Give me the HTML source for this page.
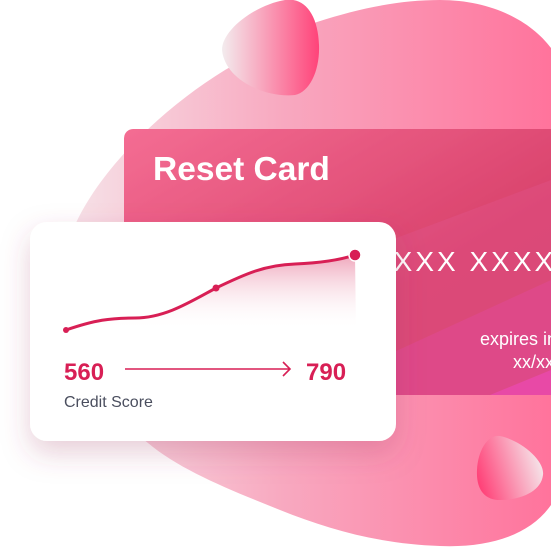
<!DOCTYPE html>
<html><head><style>
html,body{margin:0;padding:0;width:551px;height:551px;overflow:hidden;background:#fff;font-family:"Liberation Sans",sans-serif}
.abs{position:absolute}
</style></head><body>
<svg class="abs" style="left:0;top:0" width="551" height="551" viewBox="0 0 551 551">
<defs>
<linearGradient id="bg" x1="0" y1="0" x2="1" y2="0">
<stop offset="0" stop-color="#f6e4e9"/><stop offset="0.45" stop-color="#f8a9c0"/><stop offset="1" stop-color="#ff739c"/>
</linearGradient>
<linearGradient id="b1" x1="0" y1="0" x2="1" y2="0">
<stop offset="0" stop-color="#f3ecee"/><stop offset="1" stop-color="#ff4379"/>
</linearGradient>
<linearGradient id="b2" x1="1" y1="0.3" x2="0" y2="0.6">
<stop offset="0" stop-color="#f5eef0"/><stop offset="1" stop-color="#ff4379"/>
</linearGradient>
<linearGradient id="card" x1="0" y1="0" x2="1" y2="1">
<stop offset="0" stop-color="#f46d93"/><stop offset="0.6" stop-color="#d9426c"/><stop offset="1" stop-color="#d43d6c"/>
</linearGradient>
<linearGradient id="fill" x1="0" y1="0" x2="0" y2="1">
<stop offset="0" stop-color="#e8809e" stop-opacity="0.7"/><stop offset="1" stop-color="#fff" stop-opacity="0"/>
</linearGradient>
<filter id="sh" x="-30%" y="-30%" width="160%" height="160%"><feDropShadow dx="0" dy="12" stdDeviation="14" flood-color="#a04060" flood-opacity="0.25"/></filter>
<clipPath id="cc"><rect x="124" y="129" width="460" height="266" rx="9"/></clipPath>
</defs>
<path d="M317,22 C360,8 400,0 440,0 C490,0 530,20 551,48 L551,505 C530,535 490,548 440,546 C380,544 330,530 280,510 C230,490 180,470 148,443 C80,390 40,300 75,225 C100,170 160,110 225,70 C260,50 290,32 317,22 Z" fill="url(#bg)"/>
<path d="M222,50 C222,30 255,5 285,0 C305,-3 318,15 319,45 C320,70 310,92 295,95 C265,98 225,80 222,50 Z" fill="url(#b1)"/>
<path d="M500,436 C520,440 545,460 543,475 C541,492 520,500 500,500 C485,500 476,490 477,470 C478,450 488,434 500,436 Z" fill="url(#b2)"/>
<g clip-path="url(#cc)" filter="url(#sh)">
<rect x="124" y="129" width="460" height="266" rx="9" fill="url(#card)"/>
<path d="M124,395 L124,340 L551,180 L551,395 Z" fill="#e05488" opacity="0.45"/>
<path d="M300,395 L551,280 L551,395 Z" fill="#e24a98" opacity="0.5"/>
<path d="M490,395 L551,370 L551,395 Z" fill="#e84aa6"/>
</g>
<text x="153" y="180" fill="#fff" font-family="Liberation Sans" font-weight="bold" font-size="33.5">Reset Card</text>
<text x="372" y="271" fill="#fff" font-family="Liberation Sans" font-size="28" letter-spacing="3">XXXX XXXX</text>
<text x="480" y="345" fill="#fff" font-family="Liberation Sans" font-size="18">expires in</text>
<text x="513" y="368" fill="#fff" font-family="Liberation Sans" font-size="18">xx/xx</text>
<rect x="30" y="222" width="366" height="219" rx="17" fill="#fff" filter="url(#sh)"/>
<path d="M66,330 C95,320 110,318 135,318 C165,318 190,302 216,288 C245,274 265,265 295,264 C320,263 340,260 355,255 L356,330 Z" fill="url(#fill)"/>
<path d="M66,330 C95,320 110,318 135,318 C165,318 190,302 216,288 C245,274 265,265 295,264 C320,263 340,260 355,255" fill="none" stroke="#d81f55" stroke-width="3" stroke-linecap="round"/>
<circle cx="66" cy="330" r="3" fill="#d81f55"/>
<circle cx="216" cy="288" r="3.5" fill="#d81f55"/>
<circle cx="355" cy="255" r="6" fill="#d81f55" stroke="#fff" stroke-width="1.5"/>
<text x="64" y="380" fill="#d81f55" font-family="Liberation Sans" font-size="24" font-weight="bold">560</text>
<path d="M125,369 L290,369 M283,362 L290,369 L283,376" fill="none" stroke="#d81f55" stroke-width="1.6"/>
<text x="306" y="380" fill="#d81f55" font-family="Liberation Sans" font-size="24" font-weight="bold">790</text>
<text x="64" y="407" fill="#4a4e5e" font-family="Liberation Sans" font-size="16">Credit Score</text>
</svg>
</body></html>
